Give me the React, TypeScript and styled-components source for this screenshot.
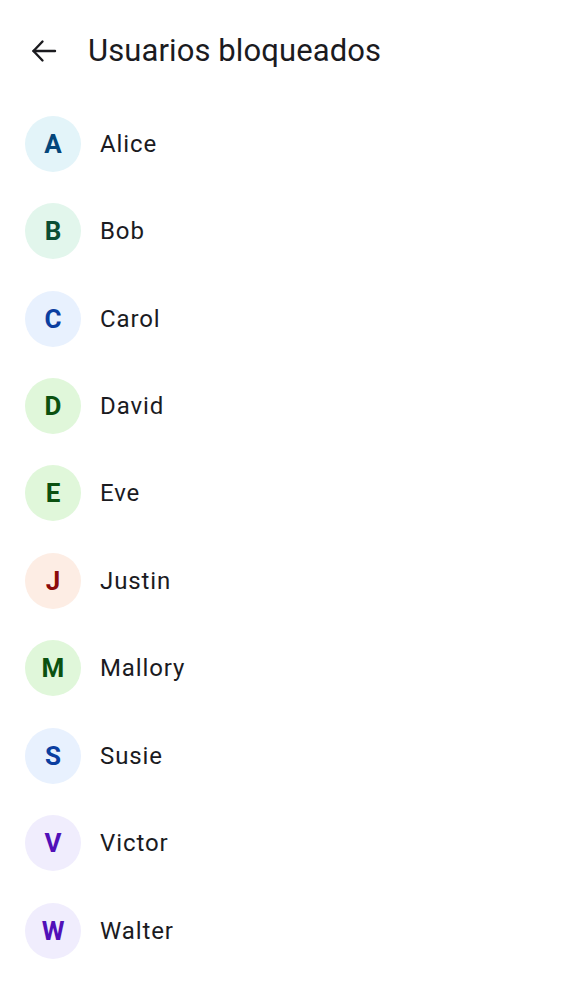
import React from "react";
import styled, { createGlobalStyle } from "styled-components";

const Global = createGlobalStyle`
  html, body { margin: 0; padding: 0; background: #ffffff; }
  body { font-family: Roboto, "Noto Sans", sans-serif; color: #1b1b1f; }
`;

const Page = styled.div`
  width: 562px;
  display: flex;
  flex-direction: column;
`;

const TopBar = styled.header`
  height: 100px;
  display: flex;
  align-items: center;
  padding-left: 27px;
  gap: 27px;
  box-sizing: border-box;
`;

const BackButton = styled.button`
  width: 34px;
  height: 34px;
  padding: 0;
  border: 0;
  background: none;
  display: flex;
  align-items: center;
  justify-content: center;
  color: #1b1b1f;
  margin-top: 2px;
`;

const Title = styled.h1`
  margin: 0;
  font-size: 31px;
  font-weight: 400;
  color: #1b1b1f;
  letter-spacing: 0.1px;
`;

const List = styled.ul`
  list-style: none;
  margin: 0;
  padding: 0;
`;

const Row = styled.li`
  height: 87.44px;
  display: flex;
  align-items: center;
  padding-left: 25px;
  gap: 19px;
`;

const Avatar = styled.div<{ $bg: string; $fg: string }>`
  width: 56px;
  height: 56px;
  border-radius: 50%;
  background: ${(p) => p.$bg};
  color: ${(p) => p.$fg};
  display: flex;
  align-items: center;
  justify-content: center;
  font-size: 26px;
  font-weight: 700;
`;

const Name = styled.span`
  font-size: 24px;
  color: #1b1b1f;
  letter-spacing: 0.9px;
`;

const palette = {
  cyan: { bg: "#e3f4f9", fg: "#04467a" },
  mint: { bg: "#e2f6ec", fg: "#0a4d33" },
  blue: { bg: "#e8f1fe", fg: "#0b3ea0" },
  green: { bg: "#e0f7da", fg: "#0b5110" },
  peach: { bg: "#fdede4", fg: "#8b0a0a" },
  violet: { bg: "#f0edfd", fg: "#5110b8" },
};

const users: { name: string; c: keyof typeof palette }[] = [
  { name: "Alice", c: "cyan" },
  { name: "Bob", c: "mint" },
  { name: "Carol", c: "blue" },
  { name: "David", c: "green" },
  { name: "Eve", c: "green" },
  { name: "Justin", c: "peach" },
  { name: "Mallory", c: "green" },
  { name: "Susie", c: "blue" },
  { name: "Victor", c: "violet" },
  { name: "Walter", c: "violet" },
];

export default function App() {
  return (
    <Page>
      <Global />
      <TopBar>
        <BackButton aria-label="Atrás">
          <svg width="34" height="34" viewBox="0 0 34 34" fill="none" stroke="currentColor" strokeWidth="2.4" strokeLinecap="round" strokeLinejoin="round">
            <path d="M28 17H6.5" />
            <path d="M15.5 7.5L6.5 17l9 9.5" />
          </svg>
        </BackButton>
        <Title>Usuarios bloqueados</Title>
      </TopBar>
      <List>
        {users.map((u) => (
          <Row key={u.name}>
            <Avatar $bg={palette[u.c].bg} $fg={palette[u.c].fg}>
              {u.name[0]}
            </Avatar>
            <Name>{u.name}</Name>
          </Row>
        ))}
      </List>
    </Page>
  );
}
